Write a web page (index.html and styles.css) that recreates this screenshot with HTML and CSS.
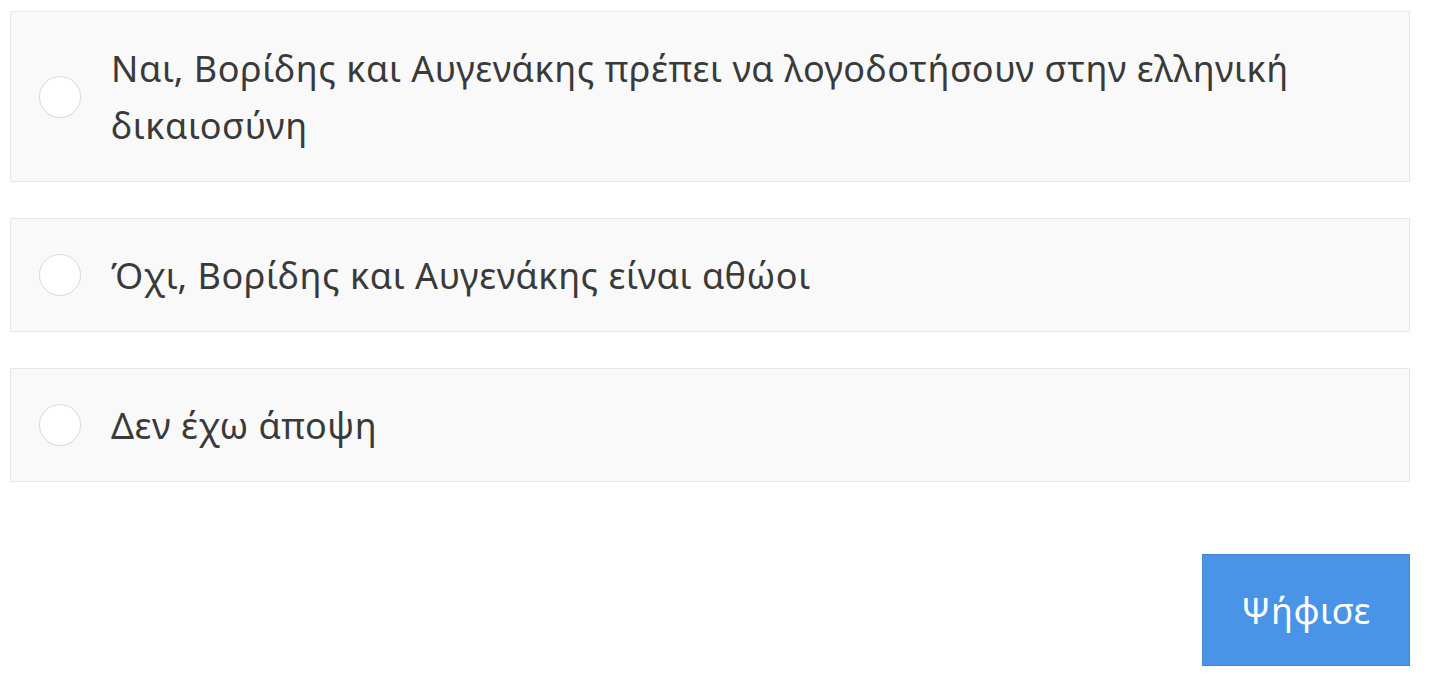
FILE: index.html
```html
<!DOCTYPE html>
<html lang="el">
<head>
<meta charset="utf-8">
<title>Ψηφοφορία</title>
<link rel="stylesheet" href="styles.css">
</head>
<body>
<form class="poll">
  <label class="choice">
    <span class="radio"></span>
    <span class="answer">Ναι, Βορίδης και Αυγενάκης πρέπει να λογοδοτήσουν στην ελληνική δικαιοσύνη</span>
  </label>
  <label class="choice">
    <span class="radio"></span>
    <span class="answer">Όχι, Βορίδης και Αυγενάκης είναι αθώοι</span>
  </label>
  <label class="choice">
    <span class="radio"></span>
    <span class="answer">Δεν έχω άποψη</span>
  </label>
  <div class="actions">
    <button type="button" class="vote">Ψήφισε</button>
  </div>
</form>
</body>
</html>
```
FILE: styles.css
```css
body
  {
	margin : 0;
	background-color : #FFFFFF;
	font-family : "Noto Sans", "DejaVu Sans", sans-serif;
	color : #3A3A3A;
  } /*body*/

form.poll
  {
	display : flex;
	flex-direction : column;
	gap : 36px;
	padding : 11px 21px 0 10px;
  } /*form.poll*/

label.choice
  {
	display : flex;
	align-items : center;
	padding : 27.5px 20px 27.5px 28px;
	background-color : #F9F9F9;
	border : 1px solid #E8E8E8;
  } /*label.choice*/

span.radio
  {
	flex : none;
	width : 40px;
	height : 40px;
	margin-right : 30px;
	border : 1.5px solid #DADADA;
	border-radius : 50%;
	background-color : #FFFFFF;
  } /*span.radio*/

span.answer
  {
	font-size : 36px;
	line-height : 57px;
	letter-spacing : 0.55px;
  } /*span.answer*/

div.actions
  {
	display : flex;
	justify-content : flex-end;
	margin-top : 36px;
  } /*div.actions*/

button.vote
  {
	width : 208px;
	height : 112px;
	border : 1px solid #3F86D9;
	background-color : #4A94E8;
	color : #FFFFFF;
	font-family : inherit;
	font-size : 36px;
	letter-spacing : 0.5px;
  } /*button.vote*/
```
